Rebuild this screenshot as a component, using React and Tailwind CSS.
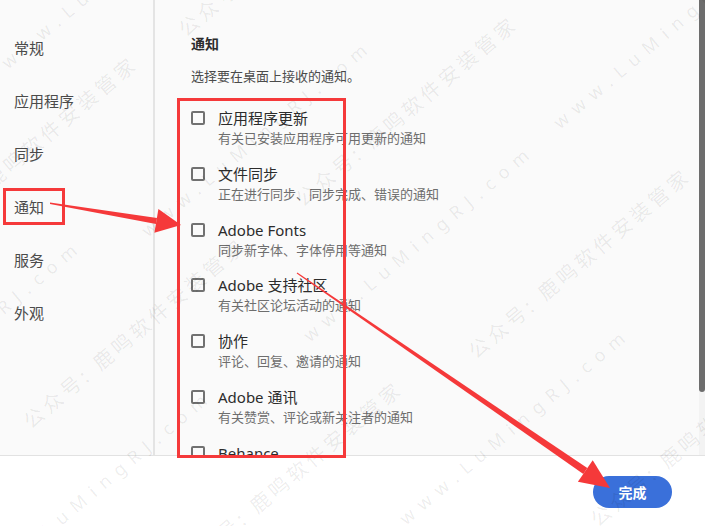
const font = { fontFamily: '"Noto Sans", "Noto Sans CJK SC", sans-serif' }

const navItems = ["常规", "应用程序", "同步", "通知", "服务", "外观"]

const notices = [
    { title: "应用程序更新", desc: "有关已安装应用程序可用更新的通知" },
    { title: "文件同步", desc: "正在进行同步、同步完成、错误的通知" },
    { title: "Adobe Fonts", desc: "同步新字体、字体停用等通知" },
    { title: "Adobe 支持社区", desc: "有关社区论坛活动的通知" },
    { title: "协作", desc: "评论、回复、邀请的通知" },
    { title: "Adobe 通讯", desc: "有关赞赏、评论或新关注者的通知" },
    { title: "Behance", desc: "" },
]

const URL_MARK = "www.LuMingRJ.com"
const CN_MARK = "公众号: 鹿鸣软件安装管家"

// faint diagonal watermark, each entry placed at the start of its string
const marks = [
    { t: URL_MARK, c: "left-[10px] top-[52px]" },
    { t: CN_MARK, c: "left-[-75px] top-[230px]" },
    { t: CN_MARK, c: "left-[188px] top-[20px]" },
    { t: URL_MARK, c: "left-[150px] top-[220px]" },
    { t: CN_MARK, c: "left-[305px] top-[190px]" },
    { t: URL_MARK, c: "left-[562px] top-[112px]" },
    { t: CN_MARK, c: "left-[33px] top-[412px]" },
    { t: URL_MARK, c: "left-[-140px] top-[420px]" },
    { t: URL_MARK, c: "left-[312px] top-[325px]" },
    { t: CN_MARK, c: "left-[478px] top-[342px]" },
    { t: URL_MARK, c: "left-[-10px] top-[570px]" },
    { t: CN_MARK, c: "left-[190px] top-[555px]" },
    { t: URL_MARK, c: "left-[408px] top-[508px]" },
    { t: CN_MARK, c: "left-[600px] top-[510px]" },
]

function Watermark() {
    return (
        <div className="pointer-events-none absolute inset-0 overflow-hidden">
            {marks.map((m, i) => (
                <span
                    key={i}
                    className={"absolute h-[20px] whitespace-nowrap leading-[20px] origin-bottom-left rotate-[-40deg] text-black/[0.08] " + m.c + (m.t === URL_MARK ? " text-[18px] tracking-[8px]" : " text-[20px] tracking-[4px]")}
                >
                    {m.t}
                </span>
            ))}
        </div>
    )
}

function Annotations() {
    return (
        <svg className="pointer-events-none absolute inset-0" width="705" height="526" viewBox="0 0 705 526">
            <rect x="4.5" y="189.5" width="59" height="34" fill="none" stroke="#f5393a" strokeWidth="3" />
            <rect x="178.5" y="99.5" width="166" height="357" fill="none" stroke="#f5393a" strokeWidth="3" />
            <polygon points="50,202.5 157,218 156,224 50,204" fill="#f5393a" />
            <polygon points="181,225 158.4,209.1 154.4,232.7" fill="#f5393a" />
            <polygon points="297.3,272.6 587.3,468.1 583.3,473.9 296.7,273.4" fill="#f5393a" />
            <polygon points="610,488 592.7,460.3 577.9,481.7" fill="#f5393a" />
        </svg>
    )
}

function NoticeRow({ title, desc }) {
    return (
        <div className="flex h-[55.8px] shrink-0 flex-row items-start gap-[13px]">
            <div className="mt-[3px] h-[14px] w-[14px] shrink-0 rounded-[2px] border-2 border-[#717171]" />
            <div className="flex flex-col">
                <div className="h-[20px] text-[15px] leading-[20px] text-[#2c2c2c]">{title}</div>
                <div className="mt-[1px] h-[18px] text-[13px] leading-[18px] text-[#6e6e6e]">{desc}</div>
            </div>
        </div>
    )
}

export default function App() {
    return (
        <div style={font} className="relative h-[526px] w-[705px] overflow-hidden bg-white">
            <div className="flex h-[456px] flex-row border-b border-[#e2e2e2] bg-[#fafafa]">
                <div className="flex w-[155px] shrink-0 flex-col border-r-2 border-[#e4e4e4] pt-[22px]">
                    {navItems.map((item) => (
                        <div key={item} className="flex h-[53px] shrink-0 items-center pl-[14px] text-[15px] text-[#4b4b4b]">
                            {item}
                        </div>
                    ))}
                </div>
                <div className="flex min-w-0 flex-1 flex-col overflow-hidden pl-[36px] pt-[34px]">
                    <div className="h-[20px] text-[14px] font-bold leading-[20px] text-[#2c2c2c]">通知</div>
                    <div className="mt-[12px] h-[20px] text-[13px] leading-[20px] text-[#4b4b4b]">选择要在桌面上接收的通知。</div>
                    <div className="mt-[22px] flex flex-col">
                        {notices.map((n) => (
                            <NoticeRow key={n.title} title={n.title} desc={n.desc} />
                        ))}
                    </div>
                </div>
                <div className="flex w-[6px] shrink-0 flex-col bg-[#f3f3f3]">
                    <div className="h-[392px] rounded-b-[3px] bg-[#6d6d6d]" />
                </div>
            </div>
            <div className="flex flex-row justify-end pr-[33px] pt-[20px]">
                <button className="h-[32px] w-[79px] rounded-full bg-[#3a70da] text-[14px] font-bold text-white">
                    完成
                </button>
            </div>
            <Watermark />
            <Annotations />
        </div>
    )
}
